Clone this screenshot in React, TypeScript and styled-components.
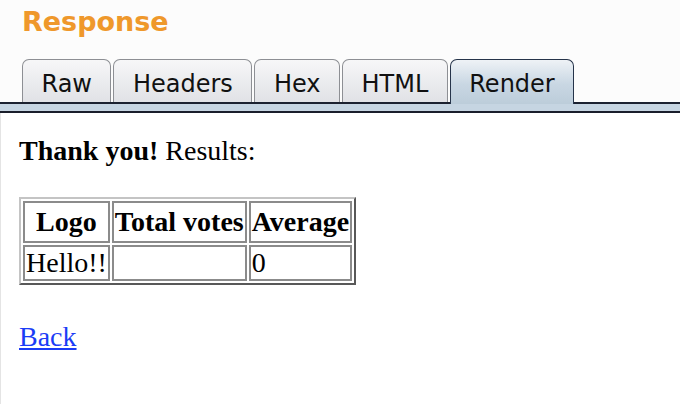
import styled, { createGlobalStyle } from "styled-components";

const GlobalStyle = createGlobalStyle`
  html, body {
    margin: 0;
    padding: 0;
    background: #fcfcfc;
  }
  body {
    width: 680px;
    height: 404px;
    overflow: hidden;
  }
`;

const Page = styled.div`
  width: 680px;
  height: 404px;
  display: flex;
  flex-direction: column;
  background: #fcfcfc;
`;

const Heading = styled.h1`
  margin: 0;
  padding: 7px 0 0 22px;
  font-family: "DejaVu Sans", "Noto Sans", sans-serif;
  font-size: 27px;
  line-height: 30px;
  font-weight: 700;
  color: #ef982b;
`;

const TabBar = styled.div`
  display: flex;
  align-items: flex-end;
  gap: 2px;
  margin-top: 22px;
  padding-left: 22px;
  border-bottom: 2px solid #1b2130;
`;

const Tab = styled.div<{ $active?: boolean }>`
  padding: 11px 18.5px 4px;
  margin-bottom: ${({ $active }) => ($active ? "-2px" : "0")};
  padding-bottom: ${({ $active }) => ($active ? "6px" : "4px")};
  border: 1px solid ${({ $active }) => ($active ? "#26344a" : "#8d8f94")};
  border-bottom: none;
  border-radius: 7px 7px 0 0;
  background: ${({ $active }) =>
    $active
      ? "linear-gradient(#eef2f6, #c9d7e3 55%, #bccdda)"
      : "linear-gradient(#f7f7f8, #e9eaed 60%, #e1e2e6)"};
  font-family: "DejaVu Sans", "Noto Sans", sans-serif;
  font-size: 24px;
  line-height: 27px;
  color: #111;
`;

const Strip = styled.div`
  height: 7px;
  background: #c6d5e2;
  border-bottom: 2px solid #1a1e2b;
`;

const Content = styled.div`
  flex: 1;
  background: #fff;
  border-left: 1px solid #e4e4e4;
  padding: 22px 0 0 18px;
  font-family: "Liberation Serif", "Times New Roman", serif;
  font-size: 28px;
  color: #000;
`;

const Intro = styled.p`
  margin: 0 0 30px;
  line-height: 32px;
`;

const Results = styled.table`
  border-collapse: separate;
  border-spacing: 2px;
  border: 2px solid;
  border-color: #c4c4c4 #585858 #585858 #c4c4c4;
  margin-bottom: 36px;
`;

const HeadCell = styled.th`
  border: 2px solid #8b8b8b;
  padding: 3px 1px;
  font-weight: 700;
  line-height: 32px;
  text-align: center;
`;

const Cell = styled.td`
  border: 2px solid #8b8b8b;
  padding: 0 1px;
  line-height: 32px;
  text-align: left;
`;

const BackLink = styled.a`
  color: #1b3cf6;
  text-decoration: underline;
  line-height: 32px;
`;

const tabs = ["Raw", "Headers", "Hex", "HTML", "Render"];

const App = () => {
  return (
    <Page>
      <GlobalStyle />
      <Heading>Response</Heading>
      <TabBar>
        {tabs.map((t) => (
          <Tab key={t} $active={t === "Render"}>
            {t}
          </Tab>
        ))}
      </TabBar>
      <Strip />
      <Content>
        <Intro>
          <b>Thank you!</b> Results:
        </Intro>
        <Results>
          <tbody>
            <tr>
              <HeadCell>Logo</HeadCell>
              <HeadCell>Total votes</HeadCell>
              <HeadCell>Average</HeadCell>
            </tr>
            <tr>
              <Cell>Hello!!</Cell>
              <Cell></Cell>
              <Cell>0</Cell>
            </tr>
          </tbody>
        </Results>
        <BackLink href="#">Back</BackLink>
      </Content>
    </Page>
  );
};

export default App;
